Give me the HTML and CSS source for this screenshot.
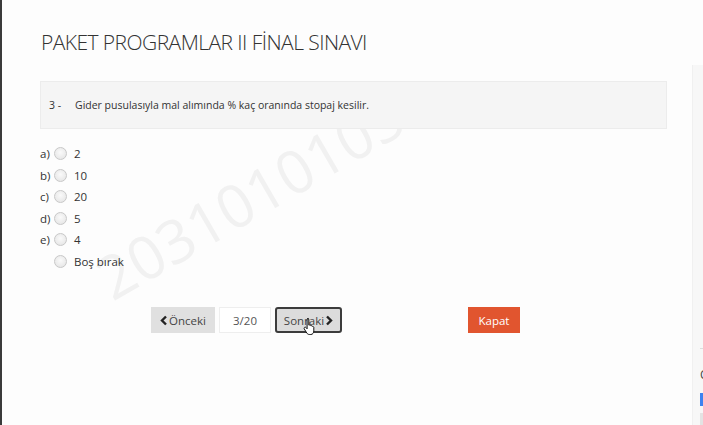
FILE: index.html
```html
<!DOCTYPE html>
<html lang="tr">
<head>
<meta charset="utf-8">
<link rel="stylesheet" href="styles.css">
</head>
<body>
<div class="page">
  <div class="main">
    <span class="watermark">20310101052</span>
    <h1 class="title">PAKET PROGRAMLAR II FİNAL SINAVI</h1>
    <div class="qbox">
      <span class="qnum">3 -</span>
      <span class="qtext">Gider pusulasıyla mal alımında % kaç oranında stopaj kesilir.</span>
    </div>
    <ul class="opts">
      <li class="opt"><span class="lbl">a)</span><span class="radio"></span><span class="val">2</span></li>
      <li class="opt"><span class="lbl">b)</span><span class="radio"></span><span class="val">10</span></li>
      <li class="opt"><span class="lbl">c)</span><span class="radio"></span><span class="val">20</span></li>
      <li class="opt"><span class="lbl">d)</span><span class="radio"></span><span class="val">5</span></li>
      <li class="opt"><span class="lbl">e)</span><span class="radio"></span><span class="val">4</span></li>
      <li class="opt"><span class="lbl"></span><span class="radio"></span><span class="val">Boş bırak</span></li>
    </ul>
    <div class="nav">
      <button class="btn prev"><svg class="chev" viewBox="0 0 8 11" width="8" height="11"><polyline points="6,1.5 2,5.5 6,9.5" fill="none" stroke="#222" stroke-width="2.4"/></svg>Önceki</button>
      <span class="count">3/20</span>
      <button class="btn next">Sonraki<svg class="chev" viewBox="0 0 8 11" width="8" height="11"><polyline points="2,1.5 6,5.5 2,9.5" fill="none" stroke="#222" stroke-width="2.4"/></svg>
        <svg class="cursor" viewBox="0 0 14 18" width="14" height="18"><path d="M4.5 1.5c.8 0 1.3.6 1.3 1.3v5.3l.6-.1c.7-.1 1.2.2 1.4.7.7-.2 1.3.1 1.5.7.7-.2 1.4.2 1.5.9v3.6c0 1.700-1 3.6-3 3.6H6.3c-1.1 0-1.9-.6-2.5-1.5L1.3 12c-.4-.7-.2-1.4.4-1.7.5-.3 1.1-.1 1.5.4l.9 1.1V2.8c0-.7.6-1.3 1.3-1.3z" fill="#fff" stroke="#111" stroke-width="1"/></svg>
      </button>
      <button class="btn close">Kapat</button>
    </div>
  </div>
  <div class="side">
    <div class="side-line"></div>
    <div class="side-c">C</div>
    <div class="side-blue"></div>
    <div class="side-gray"></div>
  </div>
</div>
</body>
</html>
```
FILE: styles.css
```css
html, body {
  margin: 0;
  padding: 0;
  height: 100%;
}
body {
  background: #fdfdfd;
  font-family: "Open Sans", "Noto Sans", sans-serif;
  color: #333;
  overflow: hidden;
}
.page {
  display: flex;
  height: 425px;
  border-left: 2px solid #3a3a3a;
}
.main {
  position: relative;
  flex: 0 0 690px;
  width: 690px;
  padding-left: 38px;
  box-sizing: border-box;
}
.title {
  position: relative;
  margin: 27px 0 0 1px;
  font-size: 21px;
  font-weight: 300;
  line-height: 30px;
  color: #333;
  letter-spacing: -0.55px;
}
.qbox {
  position: relative;
  z-index: 1;
  margin-top: 24px;
  width: 627px;
  height: 48px;
  box-sizing: border-box;
  background: #f5f5f5;
  border: 1px solid #ececec;
  display: flex;
  align-items: center;
  font-size: 10.5px;
  color: #333;
  padding-left: 8px;
}
.qnum {
  width: 26px;
}
.opts {
  list-style: none;
  margin: 14px 0 0 0;
  padding: 0;
  position: relative;
  z-index: 1;
}
.opt {
  display: flex;
  align-items: center;
  height: 21.5px;
  font-size: 11.5px;
  color: #333;
}
.lbl {
  width: 14px;
}
.radio {
  width: 11px;
  height: 11px;
  border-radius: 50%;
  border: 1px solid #c8c8c8;
  background: radial-gradient(circle at 50% 40%, #fafafa, #e2e2e2);
  margin-right: 7px;
}
.nav {
  position: relative;
  z-index: 1;
  display: flex;
  align-items: center;
  margin-top: 35px;
  padding-left: 111px;
}
.btn {
  position: relative;
  font-family: "Open Sans", "Noto Sans", sans-serif;
  font-size: 11.5px;
  height: 26px;
  border: none;
  padding: 0;
  color: #444;
  display: flex;
  align-items: center;
  justify-content: center;
  box-sizing: border-box;
}
.chev {
  display: block;
}
.prev {
  width: 64px;
  background: #e0e0e0;
}
.prev .chev {
  margin-right: 1px;
}
.count {
  width: 52px;
  height: 26px;
  margin-left: 4px;
  box-sizing: border-box;
  border: 1px solid #eee;
  background: #fff;
  font-size: 11.5px;
  color: #555;
  display: flex;
  align-items: center;
  justify-content: center;
}
.next {
  width: 67px;
  margin-left: 4px;
  background: #dcdcdc;
  border: 2px solid #3c3c3c;
  border-radius: 3px;
}
.next .chev {
  margin-left: 1px;
}
.cursor {
  position: absolute;
  left: 26px;
  top: 8px;
}
.close {
  width: 52px;
  margin-left: 126px;
  background: #e1552f;
  color: #fff;
}
.watermark {
  position: absolute;
  left: 114px;
  top: 248px;
  font-size: 60px;
  line-height: 60px;
  color: #f1f1f1;
  transform: rotate(-30deg);
  transform-origin: left bottom;
  white-space: nowrap;
  pointer-events: none;
}
.side {
  margin-top: 65px;
  flex: 1 1 0;
  min-width: 0;
  overflow: hidden;
  background: #f7f7f7;
  border-left: 1px solid #f0f0f0;
  display: flex;
  flex-direction: column;
  padding-left: 7px;
}
.side-line {
  margin-top: 283px;
  height: 1px;
  background: #ddd;
}
.side-c {
  margin-top: 19px;
  font-size: 12px;
  line-height: 14px;
  color: #444;
}
.side-blue {
  margin-top: 11px;
  height: 14px;
  background: #3d82f0;
}
.side-gray {
  margin-top: 7px;
  height: 12px;
  background: #e3e3e3;
}
```
